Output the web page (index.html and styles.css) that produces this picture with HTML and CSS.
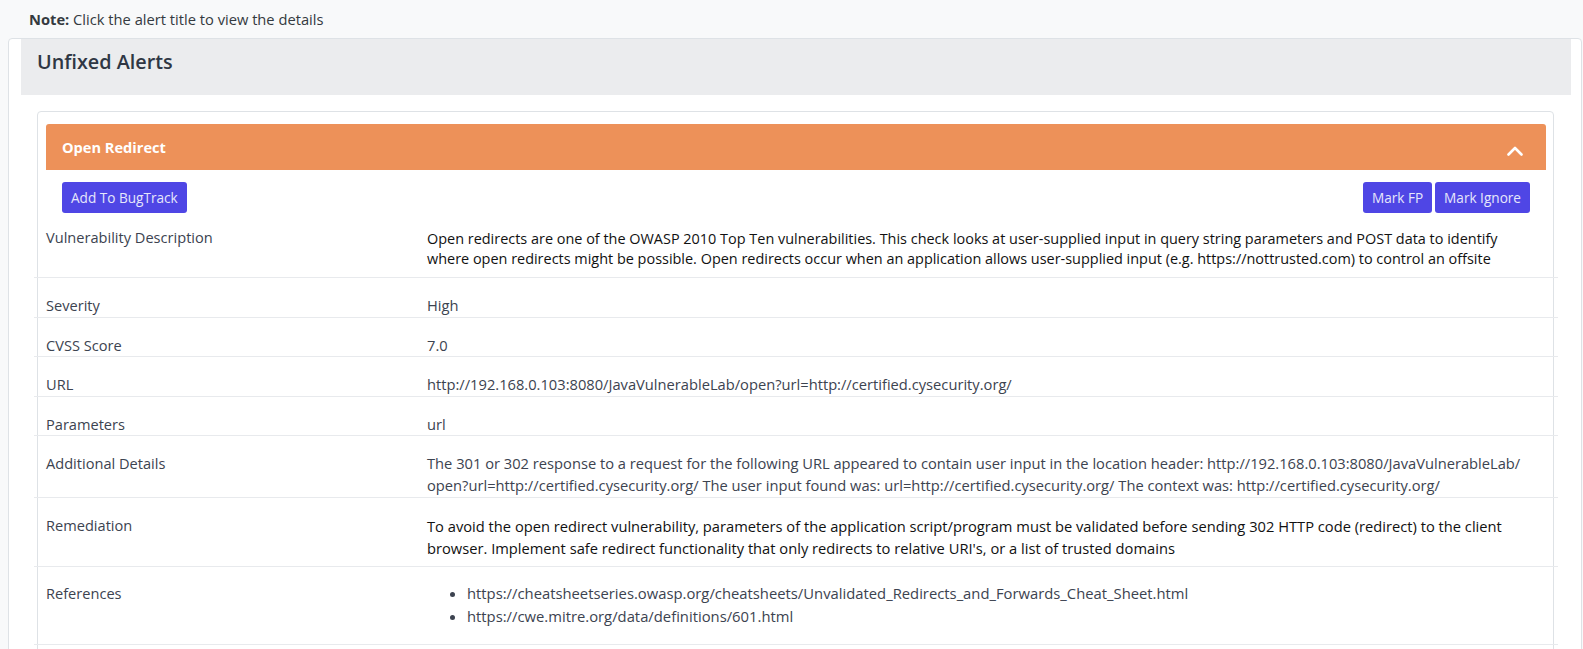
FILE: index.html
```html
<!DOCTYPE html>
<html lang="en">
<head>
<meta charset="utf-8">
<title>Unfixed Alerts</title>
<link rel="stylesheet" href="styles.css">
</head>
<body>
  <div class="note"><b>Note:</b> Click the alert title to view the details</div>
  <div class="card">
    <div class="card-header">Unfixed Alerts</div>
    <div class="card-body">
      <div class="alert-card">
        <div class="alert-title">
          <span>Open Redirect</span>
          <svg class="chevron" width="16" height="10" viewBox="0 0 16 10" aria-hidden="true">
            <polyline points="1.5,8.5 8,2 14.5,8.5" fill="none" stroke="#ffffff" stroke-width="2.6" stroke-linecap="round" stroke-linejoin="round"/>
          </svg>
        </div>
        <div class="actions">
          <button class="btn">Add To BugTrack</button>
          <div class="actions-right">
            <button class="btn">Mark FP</button>
            <button class="btn">Mark Ignore</button>
          </div>
        </div>
        <div class="details">
          <div class="row row-first">
            <div class="label">Vulnerability Description</div>
            <div class="value value-dark value-desc">Open redirects are one of the OWASP 2010 Top Ten vulnerabilities. This check looks at user-supplied input in query string parameters and POST data to identify where open redirects might be possible. Open redirects occur when an application allows user-supplied input (e.g. https://nottrusted.com) to control an offsite</div>
          </div>
          <div class="row row-single">
            <div class="label">Severity</div>
            <div class="value">High</div>
          </div>
          <div class="row row-single">
            <div class="label">CVSS Score</div>
            <div class="value">7.0</div>
          </div>
          <div class="row row-single">
            <div class="label">URL</div>
            <div class="value">http://192.168.0.103:8080/JavaVulnerableLab/open?url=http://certified.cysecurity.org/</div>
          </div>
          <div class="row row-single">
            <div class="label">Parameters</div>
            <div class="value">url</div>
          </div>
          <div class="row row-multi">
            <div class="label">Additional Details</div>
            <div class="value">The 301 or 302 response to a request for the following URL appeared to contain user input in the location header: http://192.168.0.103:8080/JavaVulnerableLab/<br>open?url=http://certified.cysecurity.org/ The user input found was: url=http://certified.cysecurity.org/ The context was: http://certified.cysecurity.org/</div>
          </div>
          <div class="row row-remed">
            <div class="label">Remediation</div>
            <div class="value value-dark">To avoid the open redirect vulnerability, parameters of the application script/program must be validated before sending 302 HTTP code (redirect) to the client browser. Implement safe redirect functionality that only redirects to relative URI's, or a list of trusted domains</div>
          </div>
          <div class="row row-refs">
            <div class="label">References</div>
            <div class="value">
              <ul class="refs">
                <li>https://cheatsheetseries.owasp.org/cheatsheets/Unvalidated_Redirects_and_Forwards_Cheat_Sheet.html</li>
                <li>https://cwe.mitre.org/data/definitions/601.html</li>
              </ul>
            </div>
          </div>
        </div>
      </div>
    </div>
  </div>
</body>
</html>
```
FILE: styles.css
```css
html, body {
  overflow: hidden;
}
body {
  margin: 0;
  background: #f8f9fa;
  font-family: "Open Sans", "Noto Sans", sans-serif;
  color: #3c4350;
}
.note {
  padding: 9px 29px 9px;
  font-size: 14.7px;
  line-height: 20px;
  color: #343a40;
}
.note b {
  font-weight: 700;
}
.card {
  margin: 0 1px 0 8px;
  background: #ffffff;
  border: 1px solid #dee2e6;
  border-radius: 4px;
  padding: 0 10px 0 12px;
}
.card-header {
  background: #ebecee;
  height: 56px;
  box-sizing: border-box;
  padding: 9px 16px 0;
  font-size: 19.8px;
  line-height: 28px;
  font-weight: 600;
  color: #2f3744;
}
.card-body {
  padding: 16px 17px 40px 16px;
}
.alert-card {
  border: 1px solid #dee2e6;
  border-radius: 4px;
  padding: 12px 7px 40px 8px;
}
.alert-title {
  background: #ed9159;
  height: 46px;
  border-radius: 3px 3px 0 0;
  padding: 0 23px 0 16px;
  display: flex;
  align-items: center;
  justify-content: space-between;
  color: #ffffff;
  font-weight: 700;
  font-size: 14.6px;
  line-height: 46px;
}
.chevron {
  margin-top: 8px;
}
.actions {
  display: flex;
  justify-content: space-between;
  padding: 12px 16px 0;
}
.actions-right {
  display: flex;
  gap: 3px;
}
.btn {
  height: 31px;
  padding: 0 9px;
  border: none;
  border-radius: 3px;
  background: #4f46e5;
  color: #e6e6fb;
  font-family: "Open Sans", "Noto Sans", sans-serif;
  font-size: 13.6px;
}
.details {
  margin: 0 -12px;
}
.row {
  display: grid;
  grid-template-columns: 381px 1fr;
  border-bottom: 1px solid #e8eaed;
  box-sizing: border-box;
}
.label {
  padding: 0 12px;
  font-size: 14.6px;
  line-height: 21.5px;
}
.value {
  padding: 0 23px 0 12px;
  font-size: 14.7px;
  line-height: 21.5px;
}
.value-dark {
  color: #111111;
  line-height: 21.7px;
}
.value-desc {
  font-size: 14.45px;
  line-height: 20.5px;
}
.row-first {
  height: 65px;
}
.row-first .label {
  padding-top: 13.5px;
}
.row-first .value {
  padding-top: 15.5px;
}
.row-single {
  height: 39.5px;
}
.row-single .label,
.row-single .value {
  padding-top: 17px;
}
.row-multi {
  height: 62px;
}
.row-multi .label,
.row-multi .value {
  padding-top: 17px;
}
.row-remed {
  height: 69px;
}
.row-remed .label {
  padding-top: 17px;
}
.row-remed .value {
  padding-top: 18px;
}
.row-refs {
  height: 78px;
}
.row-refs .label {
  padding-top: 15.5px;
}
.refs {
  margin: 0;
  padding: 15px 0 0 40px;
  line-height: 23px;
  font-size: 14.8px;
}
```
